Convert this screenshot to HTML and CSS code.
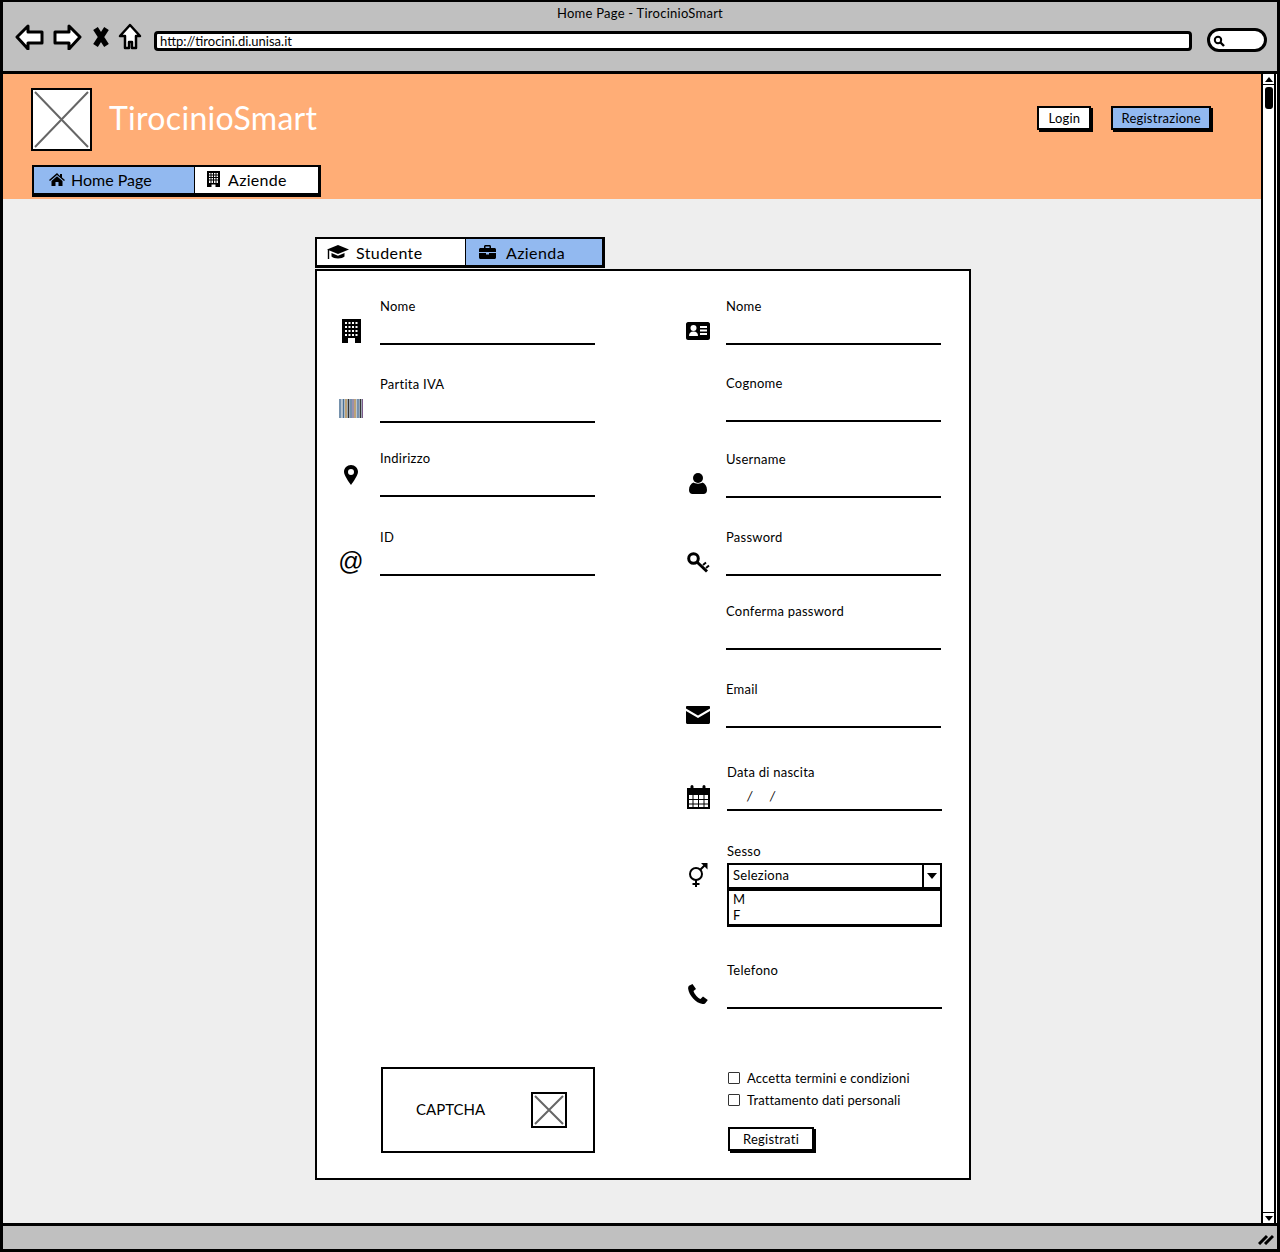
FILE: index.html
```html
<!DOCTYPE html>
<html lang="it">
<head>
    <meta charset="UTF-8">
    <title>Home Page - TirocinioSmart</title>
    <link rel="stylesheet" href="styles.css">
</head>
<body>
    <div class="window">
        <header class="chrome">
            <div class="chrome-title">Home Page - TirocinioSmart</div>
            <div class="chrome-bar">
                <svg class="nav-icon" width="30" height="26" viewBox="0 0 30 26"><path d="M2 13 13 2v6h14v11H13v6z" fill="#fff" stroke="#000" stroke-width="3" stroke-linejoin="round"/></svg>
                <svg class="nav-icon" width="30" height="26" viewBox="0 0 30 26"><path d="M28 13 17 2v6H3v11h14v6z" fill="#fff" stroke="#000" stroke-width="3" stroke-linejoin="round"/></svg>
                <svg class="nav-x" width="16" height="20" viewBox="0 0 16 20"><path d="M2.500 1.500l11 17M13.500 1.500l-11 17" stroke="#000" stroke-width="5.500"/></svg>
                <svg class="nav-home" width="24" height="28" viewBox="0 0 24 28"><path d="M12 2 2 13h5v12h4v-6h3v6h4V13h4z" fill="#fff" stroke="#000" stroke-width="2.500" stroke-linejoin="round"/></svg>
                <div class="url-box">http://tirocini.di.unisa.it</div>
                <div class="search-box">
                    <svg width="12" height="12" viewBox="0 0 12 12"><circle cx="5" cy="5" r="3.200" fill="none" stroke="#000" stroke-width="2"/><path d="M7.500 7.500 11 11" stroke="#000" stroke-width="2.400"/></svg>
                </div>
            </div>
        </header>

        <div class="middle">
            <main class="page">
                <section class="topbar">
                    <div class="topbar-row">
                        <div class="logo">
                            <svg width="57" height="59" viewBox="0 0 57 59"><path d="M2 2 55 57M55 2 2 57" stroke="#666" stroke-width="2"/></svg>
                        </div>
                        <div class="brand">TirocinioSmart</div>
                        <div class="auth">
                            <button class="btn">Login</button>
                            <button class="btn btn-blue">Registrazione</button>
                        </div>
                    </div>
                    <nav class="menu">
                        <div class="menu-item menu-active">
                            <svg width="16" height="13" viewBox="0 0 16 13"><path d="M8 0 0 7l1 1 7-6 7 6 1-1-3-2.600V1h-2v2zM2.500 8 8 3.300 13.500 8v5H9.500V9h-3v4h-4z"/></svg>
                            Home Page
                        </div>
                        <div class="menu-item">
                            <svg width="13" height="16" viewBox="0 0 13 16"><path class="ic-building" d="M0 0h13v16H0z"/><path d="M2 2h9v10H2z" fill="#fff"/><path d="M4 2v10M6.500 2v10M9 2v10M2 4h9M2 6.500h9M2 9h9" stroke="#000" stroke-width="1"/><path d="M4.500 13.500h4V16h-4z" fill="#fff"/></svg>
                            Aziende
                        </div>
                    </nav>
                </section>

                <section class="content">
                    <div class="tabs">
                        <div class="tab">
                            <svg width="22" height="16" viewBox="0 0 22 16"><path d="M11 1 0 5.500l11 4.500 11-4.500z"/><path d="M4.500 9v3.500c2 2.500 11 2.500 13 0V9L11 11.800z"/><path d="M1.500 6v9" stroke="#000" stroke-width="1.400"/></svg>
                            Studente
                        </div>
                        <div class="tab tab-active">
                            <svg width="17" height="14" viewBox="0 0 17 14"><path d="M5 3V1.500C5 .6 5.600 0 6.500 0h4c.9 0 1.500.6 1.500 1.500V3h3.500c.8 0 1.500.7 1.500 1.500V7H0V4.500C0 3.700.7 3 1.500 3zm1.500 0h4V1.500h-4z"/><path d="M0 8h7v1.500h3V8h7v4.500c0 .8-.7 1.500-1.500 1.500h-14C.7 14 0 13.300 0 12.500z"/></svg>
                            Azienda
                        </div>
                    </div>

                    <form class="panel">
                        <div class="col col-left">
                            <div class="field">
                                <div class="field-icon icon-building">
                                    <svg width="19" height="24" viewBox="0 0 19 24"><path d="M0 0h19v24H0z"/><path d="M3 3h2v2H3zM6.500 3h2v2h-2zM10 3h2v2h-2zM13.500 3h2v2h-2zM3 7h2v2H3zM6.500 7h2v2h-2zM10 7h2v2h-2zM13.500 7h2v2h-2zM3 11h2v2H3zM6.500 11h2v2h-2zM10 11h2v2h-2zM13.500 11h2v2h-2zM3 15h2v2H3zM6.500 15h2v2h-2zM10 15h2v2h-2zM13.500 15h2v2h-2zM6 19h7v5H6z" fill="#fff"/></svg>
                                </div>
                                <div class="field-body">
                                    <label>Nome</label>
                                    <div class="line"></div>
                                </div>
                            </div>
                            <div class="field">
                                <div class="field-icon icon-barcode">
                                    <svg width="24" height="19" viewBox="0 0 24 19"><path d="M0 0h24v19H0z" fill="#b9c6d2"/><path d="M1 0v19M4.500 0v19M12 0v19M19 0v19" stroke="#4a6f94" stroke-width="1.200"/><path d="M7 0v19M16 0v19" stroke="#c08a3a" stroke-width="1.200"/><path d="M9.500 0v19M21.500 0v19" stroke="#333" stroke-width="1.400"/><path d="M14 0v19M23.500 0v19" stroke="#7a5a8a" stroke-width="1"/></svg>
                                </div>
                                <div class="field-body">
                                    <label>Partita IVA</label>
                                    <div class="line"></div>
                                </div>
                            </div>
                            <div class="field">
                                <div class="field-icon icon-marker">
                                    <svg width="14" height="20" viewBox="0 0 14 20"><path fill-rule="evenodd" d="M7 0c3.900 0 7 3 7 6.800 0 3.500-4.500 9.700-7 13.200C4.500 16.500 0 10.300 0 6.800 0 3 3.100 0 7 0zm0 4a3 3 0 1 0 0 6 3 3 0 0 0 0-6z"/></svg>
                                </div>
                                <div class="field-body">
                                    <label>Indirizzo</label>
                                    <div class="line"></div>
                                </div>
                            </div>
                            <div class="field">
                                <div class="field-icon icon-at">@</div>
                                <div class="field-body">
                                    <label>ID</label>
                                    <div class="line"></div>
                                </div>
                            </div>

                            <div class="captcha">
                                <span>CAPTCHA</span>
                                <div class="captcha-img">
                                    <svg width="32" height="32" viewBox="0 0 32 32"><path d="M2 2 30 30M30 2 2 30" stroke="#666" stroke-width="2"/></svg>
                                </div>
                            </div>
                        </div>

                        <div class="col col-right">
                            <div class="field">
                                <div class="field-icon icon-card">
                                    <svg width="24" height="18" viewBox="0 0 24 18"><path d="M2 0h20c1 0 2 1 2 2v14c0 1-1 2-2 2H2c-1 0-2-1-2-2V2C0 1 1 0 2 0z"/><circle cx="7.500" cy="6" r="3" fill="#fff"/><path d="M3 14c0-3 1.500-4.500 4.500-4.500S12 11 12 14zM14 4h7v2h-7zM14 7.500h7v2h-7zM14 11h7v2h-7z" fill="#fff"/></svg>
                                </div>
                                <div class="field-body">
                                    <label>Nome</label>
                                    <div class="line"></div>
                                </div>
                            </div>
                            <div class="field">
                                <div class="field-icon"></div>
                                <div class="field-body">
                                    <label>Cognome</label>
                                    <div class="line"></div>
                                </div>
                            </div>
                            <div class="field">
                                <div class="field-icon icon-user">
                                    <svg width="18" height="21" viewBox="0 0 18 21"><circle cx="9" cy="5" r="5"/><path d="M0 17c0-4 2-6.500 4.500-7.500C6 11 12 11 13.500 9.500 16 10.500 18 13 18 17c0 2.500-1.500 4-3.500 4h-11C1.500 21 0 19.500 0 17z"/></svg>
                                </div>
                                <div class="field-body">
                                    <label>Username</label>
                                    <div class="line"></div>
                                </div>
                            </div>
                            <div class="field">
                                <div class="field-icon icon-key">
                                    <svg width="23" height="21" viewBox="0 0 23 21"><circle cx="6.500" cy="6.500" r="4.800" fill="none" stroke="#000" stroke-width="3"/><path d="M10 10 20 19.500" stroke="#000" stroke-width="3"/><path d="M16 13l3-2.500M19 16l3-2.500" stroke="#000" stroke-width="2"/></svg>
                                </div>
                                <div class="field-body">
                                    <label>Password</label>
                                    <div class="line"></div>
                                </div>
                            </div>
                            <div class="field">
                                <div class="field-icon"></div>
                                <div class="field-body">
                                    <label>Conferma password</label>
                                    <div class="line"></div>
                                </div>
                            </div>
                            <div class="field">
                                <div class="field-icon icon-mail">
                                    <svg width="24" height="18" viewBox="0 0 24 18"><path d="M0 1c0-.5.5-1 1-1h22c.5 0 1 .5 1 1v1.500L12 9.500 0 2.500z"/><path d="M0 5l12 7 12-7v11.500c0 .8-.7 1.500-1.500 1.500h-21C.7 18 0 17.300 0 16.500z"/></svg>
                                </div>
                                <div class="field-body">
                                    <label>Email</label>
                                    <div class="line"></div>
                                </div>
                            </div>
                            <div class="field field-shift">
                                <div class="field-icon icon-cal">
                                    <svg width="23" height="24" viewBox="0 0 23 24"><path d="M1 4h21v19H1z" fill="#fff" stroke="#000" stroke-width="2"/><path d="M1 4h21v6H1z"/><path d="M5 1.500v5M17 1.500v5" stroke="#000" stroke-width="3" stroke-linecap="round"/><path d="M6 10v13M11.500 10v13M17 10v13M1 14.500h21M1 19h21" stroke="#000"/></svg>
                                </div>
                                <div class="field-body">
                                    <label>Data di nascita</label>
                                    <div class="line line-date"><i>/</i><i>/</i></div>
                                </div>
                            </div>
                            <div class="field field-shift">
                                <div class="field-icon icon-gender">
                                    <svg width="20" height="24" viewBox="0 0 20 24"><circle cx="8" cy="11" r="6" fill="none" stroke="#000" stroke-width="2"/><path d="M8 17v7M4.500 21h7M12.500 6.500 18 1" stroke="#000" stroke-width="2"/><path d="M13 0h6.500v6.500z"/></svg>
                                </div>
                                <div class="field-body">
                                    <label>Sesso</label>
                                    <div class="combo">
                                        <span>Seleziona</span>
                                        <div class="combo-arrow"></div>
                                    </div>
                                    <div class="combo-list">
                                        <div>M</div>
                                        <div>F</div>
                                    </div>
                                </div>
                            </div>
                            <div class="field field-shift">
                                <div class="field-icon icon-phone">
                                    <svg width="20" height="20" viewBox="0 0 20 20"><path d="M4.500 0 1 1.800C.2 2.500 0 3.500.2 5c1 6.500 7.500 14 14.300 15 1.300.2 2.300-.2 3-1l2.300-3-4.800-3.500-2.500 2.500C9.500 14 6.500 10 5.500 7L8 5z"/></svg>
                                </div>
                                <div class="field-body">
                                    <label>Telefono</label>
                                    <div class="line"></div>
                                </div>
                            </div>

                            <div class="agree">
                                <div class="check"><span class="box"></span>Accetta termini e condizioni</div>
                                <div class="check"><span class="box"></span>Trattamento dati personali</div>
                                <button type="button" class="btn btn-submit">Registrati</button>
                            </div>
                        </div>
                    </form>
                </section>
            </main>

            <aside class="scrollbar">
                <div class="scroll-btn"><span class="arrow-up"></span></div>
                <div class="scroll-thumb"></div>
                <div class="scroll-space"></div>
                <div class="scroll-btn"><span class="arrow-down"></span></div>
            </aside>
        </div>

        <footer class="statusbar">
            <svg width="16" height="14" viewBox="0 0 16 14"><path d="M1 13 9 5M7 13 15 5" stroke="#000" stroke-width="3"/></svg>
        </footer>
    </div>
</body>
</html>
```

FILE: styles.css
```css
* {
    box-sizing: border-box;
}
body {
    margin: 0;
    font-family: Lato, "Open Sans", sans-serif;
    letter-spacing: 0.25px;
    color: #000;
    background: #fff;
}
button {
    font-family: inherit;
    letter-spacing: inherit;
}
svg {
    display: block;
    flex: none;
}
.window {
    width: 1280px;
    height: 1252px;
    border: 3px solid #000;
    border-top-width: 2px;
    display: flex;
    flex-direction: column;
    overflow: hidden;
}

/* browser chrome */
.chrome {
    height: 72px;
    flex: none;
    background: #c0c0c0;
    border-bottom: 3px solid #000;
}
.chrome-title {
    text-align: center;
    font-size: 13px;
    line-height: 16px;
    padding-top: 3px;
}
.chrome-bar {
    display: flex;
    align-items: center;
    padding: 0 10px 0 12px;
    margin-top: 1px;
    height: 30px;
}
.nav-icon {
    margin-right: 7px;
}
.nav-x {
    margin-left: 4px;
    margin-right: 9px;
}
.nav-home {
    margin-right: 12px;
}
.url-box {
    width: 1039px;
    height: 20px;
    background: #fff;
    border: 3px solid #000;
    border-radius: 4px;
    font-size: 13px;
    letter-spacing: 0;
    line-height: 15px;
    padding-left: 3px;
    margin-top: 8px;
}
.search-box {
    width: 60px;
    height: 24px;
    margin-left: 15px;
    background: #fff;
    border: 3px solid #000;
    border-radius: 12px;
    padding: 4px 0 0 3px;
    margin-top: 6px;
}

/* page */
.middle {
    flex: 1;
    display: flex;
    min-height: 0;
}
.page {
    flex: 1;
    background: #eeeeee;
}
.topbar {
    height: 125px;
    background: #ffad76;
    padding: 14px 0 0 28px;
}
.topbar-row {
    display: flex;
    align-items: flex-start;
    height: 77px;
}
.logo {
    width: 61px;
    height: 63px;
    background: #fff;
    border: 2px solid #000;
}
.brand {
    color: #fff;
    font-size: 32px;
    line-height: 60px;
    margin-left: 17px;
    letter-spacing: 0.3px;
}
.auth {
    margin-left: auto;
    display: flex;
    gap: 20px;
    padding: 18px 50px 0 0;
}
.btn {
    height: 24px;
    min-width: 54px;
    padding: 0 8px;
    background: #fff;
    border: 2px solid #000;
    box-shadow: 2px 2px 0 #000;
    font-size: 13px;
    color: #000;
}
.btn-blue {
    background: #92b9f0;
}
.menu {
    display: flex;
    width: 289px;
    height: 32px;
    margin-left: 1px;
    border: 2px solid #000;
    border-bottom-width: 4px;
    border-right-width: 3px;
}
.menu-item {
    flex: 1;
    display: flex;
    align-items: center;
    gap: 8px;
    padding: 0 0 2px 12px;
    font-size: 16px;
    letter-spacing: 0.3px;
    background: #fff;
}
.menu-active {
    flex: none;
    width: 161px;
    gap: 6px;
    padding-left: 15px;
    letter-spacing: 0;
    background: #92b9f0;
    border-right: 1px solid #000;
}
.ic-building {
    fill: #000;
}

/* form area */
.content {
    padding: 38px 0 0 312px;
}
.tabs {
    display: flex;
    width: 290px;
    height: 31px;
    border: 2px solid #000;
    border-right-width: 3px;
    border-bottom-width: 3px;
}
.tab {
    flex: 1;
    display: flex;
    align-items: center;
    gap: 7px;
    padding-left: 10px;
    font-size: 16px;
    letter-spacing: 0.4px;
    background: #fff;
}
.tab-active {
    flex: none;
    width: 137px;
    gap: 10px;
    padding-left: 13px;
    background: #92b9f0;
    border-left: 1px solid #000;
}
.panel {
    width: 656px;
    height: 911px;
    margin-top: 1px;
    background: #fff;
    border: 2px solid #000;
    display: grid;
    grid-template-columns: 345px 1fr;
}
.col {
    display: grid;
    align-content: start;
}
/* row heights follow the distance between labels in the mockup */
.col-left {
    padding: 27px 0 0 20px;
    grid-template-rows: 78px 74px 79px 538px auto;
}
.col-right {
    padding: 27px 0 0 21px;
    grid-template-rows: 77px 76px 78px 74px 78px 83px 79px 119px 104px auto;
}
.field {
    display: flex;
    align-items: flex-end;
    height: 47px;
}
.field-shift {
    margin-left: 1px;
}
.field-icon {
    width: 40px;
    flex: none;
    display: flex;
    align-items: center;
    justify-content: center;
    margin-left: -6px;
    margin-right: 9px;
    height: 30px;
}
.col-right .field-icon {
    margin-left: -5px;
    margin-right: 8px;
}
.col-right .field-shift .field-icon {
    margin-left: -6px;
    margin-right: 9px;
}
.icon-building,
.icon-card,
.icon-key,
.icon-cal {
    padding-top: 2px;
}
.icon-mail {
    padding-top: 4px;
}
.icon-marker {
    padding-bottom: 14px;
}
.icon-at {
    font-size: 25px;
    font-family: "Liberation Sans", sans-serif;
    letter-spacing: 0;
}
.field-body {
    width: 215px;
    display: flex;
    flex-direction: column;
    height: 47px;
}
.field-body label {
    font-size: 13px;
    line-height: 16px;
    display: block;
}
.line {
    flex: 1;
    border-bottom: 2px solid #000;
}
.line-date {
    display: flex;
    font-size: 13px;
    padding: 8px 0 0 20px;
    gap: 17px;
}
.combo {
    display: flex;
    height: 26px;
    margin-top: 4px;
    border: 2px solid #000;
    font-size: 13px;
    line-height: 20px;
    padding-left: 4px;
    justify-content: space-between;
    flex: none;
}
.combo-arrow {
    width: 18px;
    border-left: 2px solid #000;
    position: relative;
}
.combo-arrow::after {
    content: "";
    position: absolute;
    left: 3px;
    top: 8px;
    border: 5px solid transparent;
    border-top: 6px solid #000;
    border-bottom: 0;
}
.combo-list {
    height: 38px;
    border: 2px solid #000;
    border-bottom-width: 3px;
    font-size: 13px;
    line-height: 16px;
    padding-left: 4px;
    background: #fff;
    flex: none;
}

/* captcha and terms */
.captcha {
    width: 214px;
    height: 86px;
    margin-left: 44px;
    border: 2px solid #000;
    display: flex;
    align-items: center;
    padding: 0 0 2px 33px;
    font-size: 15px;
    letter-spacing: 0;
}
.captcha-img {
    width: 36px;
    height: 36px;
    margin: 2px 0 0 46px;
    border: 2px solid #000;
}
.agree {
    margin-left: 45px;
    padding-top: 1px;
}
.check {
    display: flex;
    align-items: center;
    gap: 7px;
    font-size: 13px;
    letter-spacing: 0.15px;
    height: 22px;
}
.box {
    width: 12px;
    height: 12px;
    border: 1px solid #333;
    border-radius: 1px;
    background: #fff;
}
.btn-submit {
    display: block;
    width: 86px;
    margin: 16px 0 0 0;
    padding: 0;
}

/* scrollbar and status */
.scrollbar {
    width: 15px;
    flex: none;
    background: #fff;
    border-left: 2px solid #000;
    border-right: 2px solid #000;
    display: flex;
    flex-direction: column;
    align-items: center;
    margin-right: 1px;
}
.scroll-btn {
    height: 11px;
    width: 100%;
    display: flex;
    align-items: center;
    justify-content: center;
    border-bottom: 1px solid #000;
    flex: none;
}
.scroll-btn:last-child {
    border-bottom: 0;
    border-top: 1px solid #000;
}
.arrow-up {
    border: 4px solid transparent;
    border-bottom: 5px solid #000;
    border-top: 0;
}
.arrow-down {
    border: 4px solid transparent;
    border-top: 5px solid #000;
    border-bottom: 0;
}
.scroll-thumb {
    width: 8px;
    height: 22px;
    margin-top: 2px;
    background: #000;
    border-radius: 3px;
    flex: none;
}
.scroll-space {
    flex: 1;
}
.statusbar {
    height: 26px;
    flex: none;
    background: #c0c0c0;
    border-top: 3px solid #000;
    display: flex;
    justify-content: flex-end;
    align-items: center;
    padding-right: 3px;
}
```
